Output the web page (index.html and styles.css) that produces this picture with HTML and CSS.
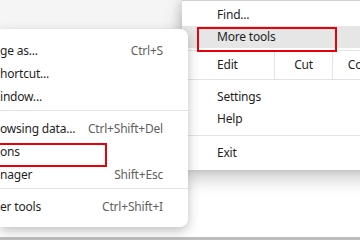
FILE: index.html
```html
<!DOCTYPE html>
<html lang="en">
<head>
  <meta charset="UTF-8" />
  <title>Menu</title>
  <link rel="stylesheet" href="styles.css">
</head>
<body>
  <div class="page">
    <div class="topband"></div>
    <div class="content"></div>
    <div class="bottombar"></div>
  </div>

  <div class="main-menu">
    <div class="item">Find...</div>
    <div class="item active marked">More tools</div>
    <div class="edit-row">
      <div class="edit-label">Edit</div>
      <div class="edit-cell">Cut</div>
      <div class="edit-cell">Copy</div>
    </div>
    <div class="item first">Settings</div>
    <div class="item">Help</div>
    <div class="sep"></div>
    <div class="item">Exit</div>
  </div>

  <div class="sub-menu">
    <div class="row"><span>ge as...</span><span class="key">Ctrl+S</span></div>
    <div class="row"><span>hortcut...</span></div>
    <div class="row"><span>indow...</span></div>
    <div class="sep"></div>
    <div class="row"><span>owsing data...</span><span class="key">Ctrl+Shift+Del</span></div>
    <div class="row marked"><span>ons</span></div>
    <div class="row"><span>nager</span><span class="key">Shift+Esc</span></div>
    <div class="sep"></div>
    <div class="row"><span>er tools</span><span class="key">Ctrl+Shift+I</span></div>
  </div>
</body>
</html>
```

FILE: styles.css
```css
* {
  box-sizing: border-box;
}
body {
  margin: 0;
  width: 360px;
  height: 240px;
  overflow: hidden;
  position: relative;
  font-family: 'Noto Sans', sans-serif;
  font-size: 12px;
  letter-spacing: -0.2px;
  color: #1f1f1f;
  background: #fff;
}
.page {
  display: flex;
  flex-direction: column;
  height: 240px;
}
.topband {
  height: 29px;
  background: #f5f5f5;
}
.content {
  flex: 1;
  background: #fff;
}
.bottombar {
  height: 3px;
  background: #bdbdbd;
}

/* main menu */
.main-menu {
  position: absolute;
  left: 182px;
  top: 0;
  width: 240px;
  height: 170px;
  padding-top: 3px;
  background: #fff;
  border-top: 1px solid #cfcfcf;
  box-shadow: 0 8px 18px rgba(0, 0, 0, 0.22), -3px 0 8px rgba(0, 0, 0, 0.1);
}
.item {
  height: 22px;
  line-height: 22px;
  padding-left: 35px;
  position: relative;
}
.item.active {
  background: #e6e6e6;
}
.item.first {
  margin-top: 6px;
}
.main-menu .marked::after {
  content: "";
  position: absolute;
  left: 15px;
  top: 1px;
  width: 136px;
  height: 21px;
  border: 2px solid #e8000b;
}
.edit-row {
  display: flex;
  height: 30px;
  margin-top: 2px;
  border-top: 1px solid #e3e3e3;
  border-bottom: 1px solid #e3e3e3;
  line-height: 28px;
}
.edit-label {
  width: 93px;
  padding-left: 35px;
  border-right: 1px solid #e3e3e3;
}
.edit-cell {
  width: 58px;
  text-align: center;
  border-right: 1px solid #e3e3e3;
}
.main-menu .sep {
  height: 1px;
  margin: 5px 0 6px;
  background: #e3e3e3;
}

/* sub menu */
.sub-menu {
  position: absolute;
  left: 0;
  top: 29px;
  width: 188px;
  height: 198px;
  padding: 10px 25px 7px 0;
  background: #fff;
  border-radius: 0 8px 8px 0;
  box-shadow: 0 4px 12px rgba(0, 0, 0, 0.25);
}
.row {
  display: flex;
  justify-content: space-between;
  height: 23px;
  line-height: 23px;
  white-space: nowrap;
  position: relative;
}
.key {
  color: #5f5f5f;
}
.sub-menu .sep {
  height: 1px;
  margin: 2px -25px 6px 0;
  background: #e3e3e3;
}
.sub-menu .marked::after {
  content: "";
  position: absolute;
  left: -10px;
  top: 3px;
  width: 113px;
  height: 20px;
  border: 2px solid #e8000b;
}
```
